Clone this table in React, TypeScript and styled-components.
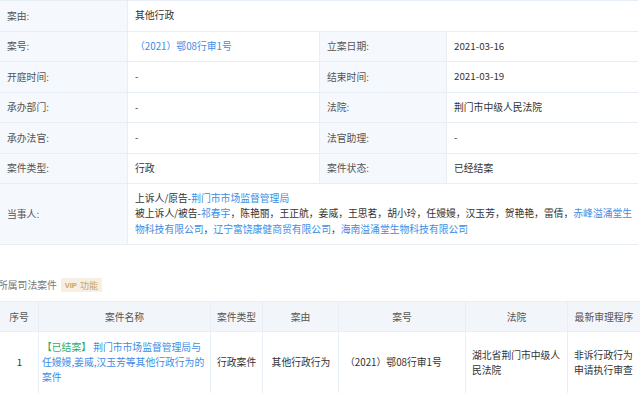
import React from 'react';
import styled, { createGlobalStyle } from 'styled-components';

const GlobalStyle = createGlobalStyle`
  body {
    margin: 0;
    background: #ffffff;
    font-family: "Noto Sans CJK SC", "Noto Sans", sans-serif;
    font-size: 9.8px;
    color: #333333;
  }
`;

const Page = styled.div`
  width: 640px;
  height: 394px;
  overflow: hidden;
  background: #ffffff;
`;

const InfoGrid = styled.div`
  display: grid;
  grid-template-columns: 127px 191px 126px 191px;
  grid-auto-rows: 29.5px;
  gap: 1px;
  width: 638px;
  background: #e8eef5;
  border: 1px solid #e8eef5;
  border-left: none;
  box-sizing: border-box;
`;

const Label = styled.div<{ $tall?: boolean }>`
  display: flex;
  align-items: center;
  padding-left: 7px;
  background: #f5f8fc;
  color: #555555;
  ${(p) => (p.$tall ? 'grid-row: span 2;' : '')}
`;

const Value = styled.div<{ $wide?: boolean; $tall?: boolean }>`
  display: flex;
  align-items: center;
  padding: 0 3px 0 7px;
  background: #ffffff;
  color: #333333;
  line-height: 15px;
  ${(p) => (p.$wide ? 'grid-column: span 3;' : '')}
  ${(p) => (p.$tall ? 'grid-row: span 2;' : '')}
`;

const Link = styled.span`
  color: #3d8de6;
`;

const Parties = styled.div`
  line-height: 15.5px;
`;

const SectionHead = styled.div`
  display: flex;
  align-items: center;
  gap: 4px;
  height: 18px;
  margin: 31px 0 7px -2px;
  color: #777777;
`;

const VipBadge = styled.span`
  display: inline-flex;
  align-items: center;
  gap: 3px;
  height: 14px;
  padding: 0 4px;
  background: #f6efe2;
  color: #c9a468;
  font-size: 9px;
  border-radius: 1px;

  b {
    font-family: "Liberation Sans", Arial, sans-serif;
    font-size: 7.5px;
    font-weight: 700;
  }
`;

const CaseGrid = styled.div`
  display: grid;
  grid-template-columns: 38px 171px 51px 75px 126px 101px 72px;
  grid-template-rows: 29px 61px;
  gap: 1px;
  background: #e8eef5;
  border-top: 1px solid #e8eef5;
  width: 640px;
`;

const Head = styled.div`
  display: flex;
  align-items: center;
  justify-content: center;
  background: #f2f6fb;
  color: #555555;
  white-space: nowrap;
`;

const Cell = styled.div<{ $center?: boolean; $tight?: boolean }>`
  display: flex;
  align-items: center;
  justify-content: ${(p) => (p.$center ? 'center' : 'flex-start')};
  padding: ${(p) => (p.$tight ? '0 2px 0 3px' : '0 5px 0 6px')};
  background: #ffffff;
  color: #333333;
  line-height: 15px;
`;

const Status = styled.span`
  color: #2fae64;
`;

const rows: [string, React.ReactNode, string, React.ReactNode][] = [
  ['案号:', <Link>（2021）鄂08行审1号</Link>, '立案日期:', '2021-03-16'],
  ['开庭时间:', '-', '结束时间:', '2021-03-19'],
  ['承办部门:', '-', '法院:', '荆门市中级人民法院'],
  ['承办法官:', '-', '法官助理:', '-'],
  ['案件类型:', '行政', '案件状态:', '已经结案'],
];

const defendants = ['陈艳丽', '王正航', '姜威', '王思茗', '胡小玲', '任嫚嫚', '汉玉芳', '贺艳艳', '雷倩'];
const companies = ['赤峰溢涌堂生物科技有限公司', '辽宁富饶康健商贸有限公司', '海南溢涌堂生物科技有限公司'];

const headers = ['序号', '案件名称', '案件类型', '案由', '案号', '法院', '最新审理程序'];

export default function App() {
  return (
    <Page>
      <GlobalStyle />
      <InfoGrid>
        <Label>案由:</Label>
        <Value $wide>其他行政</Value>
        {rows.map(([l1, v1, l2, v2]) => (
          <React.Fragment key={l1}>
            <Label>{l1}</Label>
            <Value>{v1}</Value>
            <Label>{l2}</Label>
            <Value>{v2}</Value>
          </React.Fragment>
        ))}
        <Label $tall>当事人:</Label>
        <Value $wide $tall>
          <Parties>
            上诉人/原告-<Link>荆门市市场监督管理局</Link>
            <br />
            被上诉人/被告-<Link>祁春宇</Link>，
            {defendants.map((d) => `${d}，`).join('')}
            {companies.map((c, i) => (
              <React.Fragment key={c}>
                <Link>{c}</Link>
                {i < companies.length - 1 ? '，' : ''}
              </React.Fragment>
            ))}
          </Parties>
        </Value>
      </InfoGrid>

      <SectionHead>
        所属司法案件
        <VipBadge>
          <b>VIP</b>功能
        </VipBadge>
      </SectionHead>

      <CaseGrid>
        {headers.map((h) => (
          <Head key={h}>{h}</Head>
        ))}
        <Cell $center>1</Cell>
        <Cell $tight>
          <div>
            <Status>【已结案】</Status> <Link>荆门市市场监督管理局与任嫚嫚,姜威,汉玉芳等其他行政行为的案件</Link>
          </div>
        </Cell>
        <Cell>行政案件</Cell>
        <Cell $center>其他行政行为</Cell>
        <Cell>（2021）鄂08行审1号</Cell>
        <Cell>湖北省荆门市中级人民法院</Cell>
        <Cell>非诉行政行为申请执行审查</Cell>
      </CaseGrid>
    </Page>
  );
}
